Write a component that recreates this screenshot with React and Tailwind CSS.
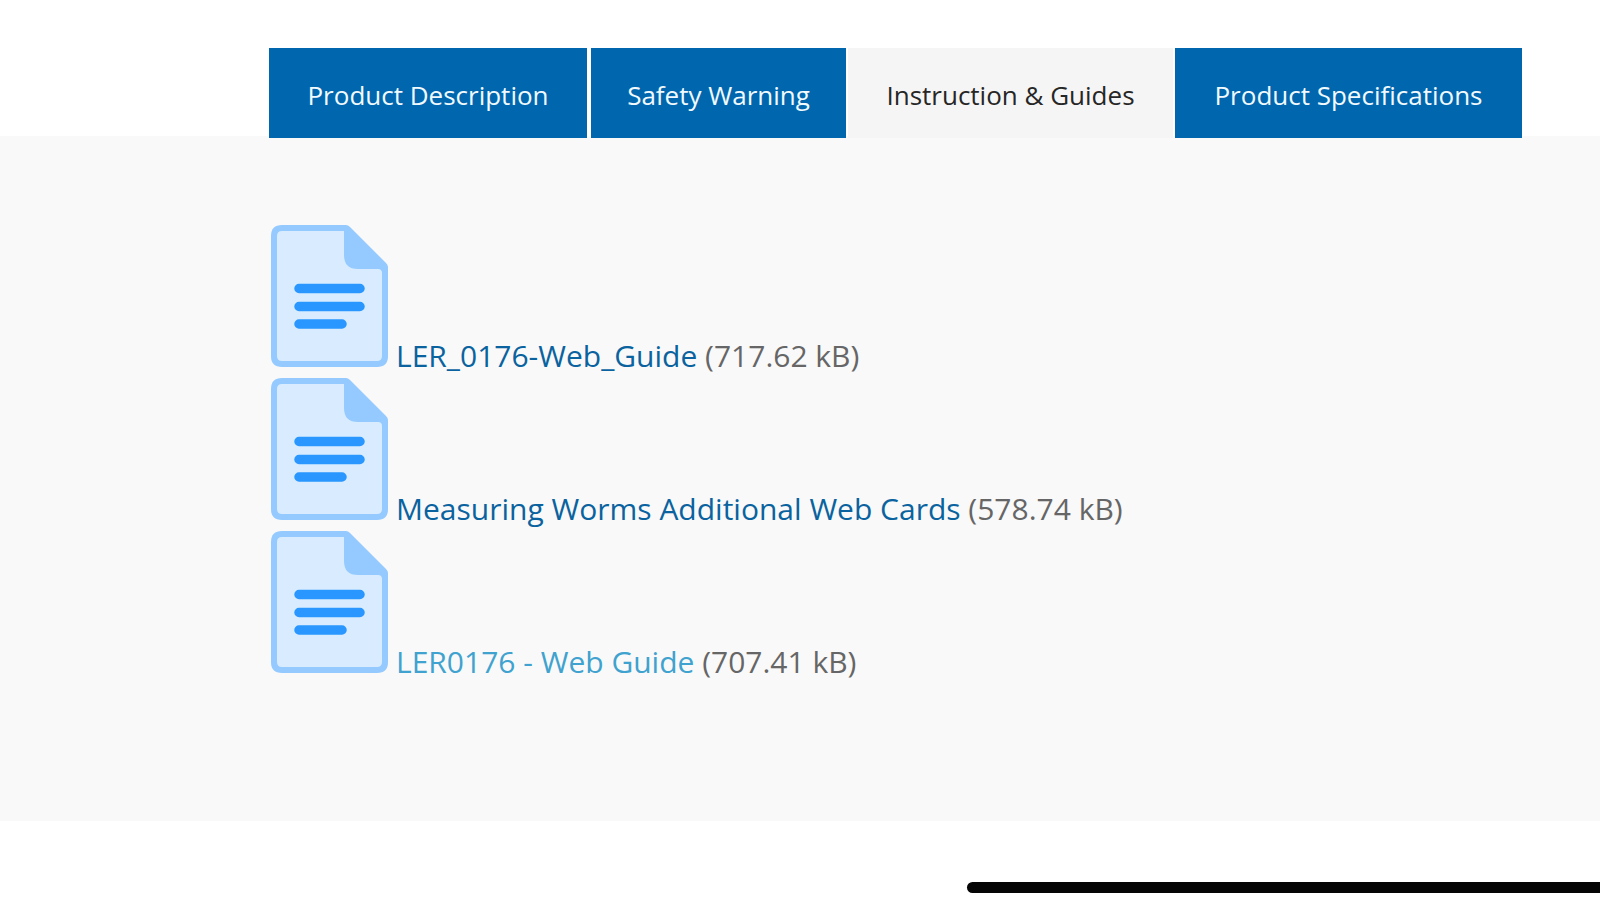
const tabs = [
  { label: "Product Description", width: "w-[318px]" },
  { label: "Safety Warning", width: "w-[255px]" },
  { label: "Instruction & Guides", width: "w-[325px]", active: true },
  { label: "Product Specifications", width: "w-[347px]" },
];

const files = [
  { name: "LER_0176-Web_Guide", size: "717.62 kB", color: "text-[#0a639f]" },
  { name: "Measuring Worms Additional Web Cards", size: "578.74 kB", color: "text-[#0a639f]" },
  { name: "LER0176 - Web Guide", size: "707.41 kB", color: "text-[#3fa2cf]" },
];

function FileIcon() {
  return (
    <svg className="h-[142px] w-[118px] shrink-0" viewBox="0 0 118 142" aria-hidden="true">
      <path d="M11 0H75Q77 0 79 2L115 38Q117 40 117 42V131Q117 142 106 142H11Q0 142 0 131V11Q0 0 11 0Z" fill="#94caff" />
      <path d="M11 6H73V30Q73 44 87 44H107Q111 44 111 48V131Q111 136 106 136H11Q6 136 6 131V11Q6 6 11 6Z" fill="#d9ecff" />
      <path d="M28 63.500H89M28 81.500H89M28 99H71" stroke="#2997ff" strokeWidth="9.500" strokeLinecap="round" fill="none" />
    </svg>
  );
}

export default function App() {
  return (
    <div className="flex min-h-screen flex-col bg-white pt-12 font-['Open_Sans','Noto_Sans',sans-serif]">
      <div role="tablist" className="relative z-10 -mb-0.5 flex gap-x-1 pl-[269px]">
        {tabs.map((t) => (
          <button
            key={t.label}
            type="button"
            role="tab"
            aria-selected={!!t.active}
            className={`h-[90px] shrink-0 whitespace-nowrap pt-1 text-[26px] ${t.width} ${
              t.active ? "-mx-0.5 bg-[#f5f5f5] text-[#262626]" : "bg-[#0066ae] text-[#f0faff]"
            }`}
          >
            {t.label}
          </button>
        ))}
      </div>
      <main role="tabpanel" className="bg-[#f9f9f9] pb-[148px] pl-[271px] pt-[89px]">
        <ul className="flex flex-col gap-[11px]">
          {files.map((f) => (
            <li key={f.name} className="flex h-[142px] items-end">
              <FileIcon />
              <p className="ml-[7px] whitespace-nowrap text-[30px] leading-[22px] text-[#666666]">
                <a href="#" className={f.color}>{f.name}</a> ({f.size})
              </p>
            </li>
          ))}
        </ul>
      </main>
      <div className="mt-[61px] h-[11px] w-[633px] self-end rounded-l-full bg-[#050505]" />
    </div>
  );
}
